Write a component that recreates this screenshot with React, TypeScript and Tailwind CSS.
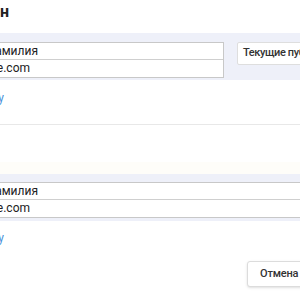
import React from "react";

function EndText({ w, children, className = "" }: { w: string; children: React.ReactNode; className?: string }) {
  return (
    <div className={`${w} flex justify-end ${className}`}>
      <span className="shrink-0 whitespace-nowrap">{children}</span>
    </div>
  );
}

function InputPair() {
  return (
    <>
      <div className="h-[17px] border-b border-[#cfcfcf] text-[12px] leading-[17px] text-[#222]">
        <EndText w="w-[97px]">Имя Фамилия</EndText>
      </div>
      <div className="h-[17px] text-[12px] leading-[17px] text-[#222]">
        <EndText w="w-[89px]">name@example.com</EndText>
      </div>
    </>
  );
}

export default function App() {
  return (
    <div className="w-[300px] h-[300px] overflow-hidden bg-white text-[#333] font-['Roboto',sans-serif]">
      <div className="ml-[-60px] w-[460px]">
        {/* heading */}
        <div className="h-[33px] pt-[2px] text-[16px] font-bold leading-[20px] text-[#222]">
          <EndText w="w-[69px]">Шаблон</EndText>
        </div>
        {/* section 1 */}
        <div className="bg-[#eef0f9] pt-[9px] pb-[2px] flex items-start">
          <div className="w-[284px] shrink-0 flex flex-col bg-white border border-[#c8c8c8]">
            <InputPair />
          </div>
          <button className="ml-[13px] shrink-0 h-[23px] px-[5px] bg-white border border-[#dedede] rounded-[2px] text-[11px] font-medium tracking-[-0.4px] text-[#333] whitespace-nowrap">
            Текущие публикации
          </button>
        </div>
        <div className="h-[44px] pt-[10px] text-[12px] leading-[16px] text-[#4a94dc]">
          <EndText w="w-[64px]">Добавить строку</EndText>
        </div>
        <div className="border-t border-[#e8e8e8]" />
        <div className="h-[37px]" />
        <div className="h-[12px] bg-[#fefdf9]" />
        <div className="bg-[#eef0f9] pt-[8px] pb-[3px]">
          <div className="flex flex-col bg-white border border-[#c8c8c8]">
            <InputPair />
          </div>
        </div>
        <div className="h-[40px] pt-[9px] text-[12px] leading-[16px] text-[#4a94dc]">
          <EndText w="w-[64px]">Добавить строку</EndText>
        </div>
        <div className="flex justify-start pl-[307px]">
          <button className="h-[26px] px-[12px] bg-white border border-[#dcdcdc] rounded-[3px] shadow-sm text-[11px] font-medium tracking-[-0.2px] text-[#333] whitespace-nowrap">
            Отмена
          </button>
        </div>
      </div>
    </div>
  );
}
